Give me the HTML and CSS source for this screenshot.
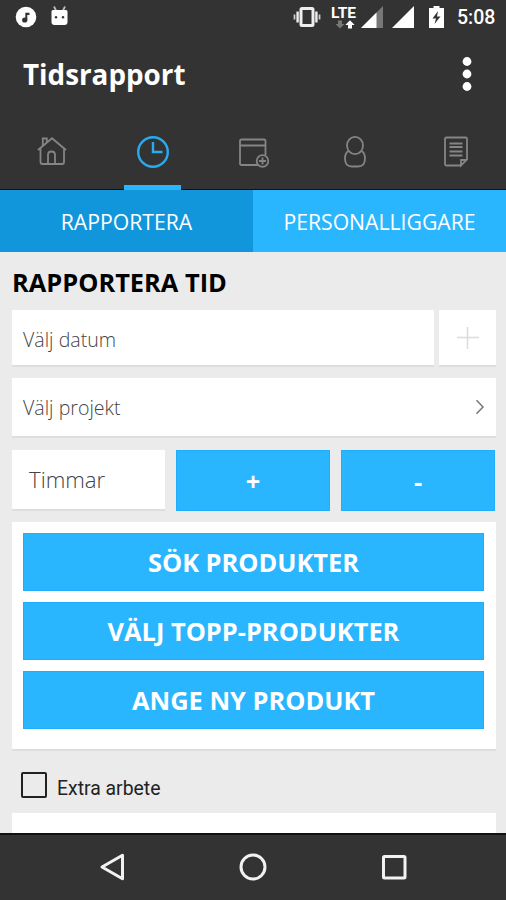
FILE: index.html
```html
<!DOCTYPE html>
<html lang="sv">
<head>
    <meta charset="UTF-8">
    <meta name="viewport" content="width=device-width, initial-scale=1.0">
    <title>Tidsrapport</title>
    <link rel="stylesheet" href="styles.css">
</head>
<body>

<!-- Status bar -->
<div class="status-bar">
    <svg class="status-left" width="56" height="24" viewBox="0 0 56 24">
        <circle cx="11" cy="12" r="10.3" fill="#fff"/>
        <path d="M10.300 15.500V7.800H14.500V10H12.300V15.500" fill="#333"/>
        <circle cx="9.700" cy="15" r="2.600" fill="#333"/>
        <path d="M39 1.500l2 4M50 1.500l-2 4" stroke="#bbb" stroke-width="1.800"/>
        <path d="M36.500 6.500Q36.500 5 38 5H51Q52.500 5 52.500 6.500V17Q52.500 20 49.500 20H39.500Q36.500 20 36.500 17Z" fill="#fff"/>
        <circle cx="41" cy="12.300" r="1.200" fill="#333"/>
        <circle cx="48" cy="12.300" r="1.200" fill="#333"/>
    </svg>
    <div class="status-right">
        <svg width="28" height="24" viewBox="0 0 28 24">
            <path d="M1.500 9.500v5M26.500 9.500v5" stroke="#ccc" stroke-width="1.800"/>
            <path d="M4.600 6.500v11M23.400 6.500v11" stroke="#eee" stroke-width="2.400"/>
            <rect x="8" y="3.500" width="12" height="17" rx="1" fill="none" stroke="#eee" stroke-width="3"/>
        </svg>
        <div class="lte">
            <span>LTE</span>
            <svg width="20" height="9" viewBox="0 0 20 9">
                <path d="M5 8.500L.5 4H3V.5H7V4H9.500Z" fill="#777"/>
                <path d="M15 .3L19.700 5H17V8.500H13V5H10.300Z" fill="#fff"/>
            </svg>
        </div>
        <svg class="signal" width="22" height="22" viewBox="0 0 22 22">
            <path d="M0 22L22 0V22Z" fill="#777"/>
            <path d="M0 22L15.500 6.500V22Z" fill="#fff"/>
        </svg>
        <svg class="signal full" width="22" height="22" viewBox="0 0 22 22">
            <path d="M0 22L22 0V22Z" fill="#fff"/>
        </svg>
        <svg class="battery" width="15" height="22" viewBox="0 0 15 22">
            <path d="M4.500 0h6v2H15v20H0V2H4.500Z" fill="#fff"/>
            <path d="M9 5L3.500 12.500H7L5.500 18L11.500 10.500H8Z" fill="#333"/>
        </svg>
        <span class="time">5:08</span>
    </div>
</div>

<!-- Title and menu -->
<header class="title-bar">
    <h1>Tidsrapport</h1>
    <svg width="10" height="36" viewBox="0 0 10 36" fill="#fff">
        <circle cx="5" cy="5.500" r="4.400"/>
        <circle cx="5" cy="18" r="4.400"/>
        <circle cx="5" cy="30.500" r="4.400"/>
    </svg>
</header>

<!-- Icon tabs -->
<nav class="tabs">
    <a class="tab">
        <svg width="34" height="34" viewBox="0 0 34 34">
            <path d="M3 15L17 3.200L31 15M5.500 13.500V27Q5.500 29 7.500 29H27Q29 29 29 27V13.500M7.800 11V3.500H11.800V7.500M13 29V20Q13 16.500 16.500 16.500Q20 16.500 20 20V29"/>
        </svg>
    </a>
    <a class="tab active">
        <svg width="34" height="34" viewBox="0 0 34 34">
            <circle cx="17" cy="17" r="14.800"/>
            <path d="M17 7V17H26.500"/>
        </svg>
    </a>
    <a class="tab">
        <svg width="34" height="34" viewBox="0 0 34 34">
            <path d="M21 30H4.500Q3 30 3 28.500V6Q3 4.500 4.500 4.500H27Q28.500 4.500 28.500 6V20M3 10.500H28.500"/>
            <circle cx="25.500" cy="26" r="5.800"/>
            <path d="M25.500 22.500V29.500M22 26H29"/>
        </svg>
    </a>
    <a class="tab">
        <svg width="34" height="34" viewBox="0 0 34 34">
            <ellipse cx="17" cy="10.500" rx="8" ry="8.700"/>
            <path d="M10.500 16Q7 18 7 23.500Q7 31.500 14 31.500H20Q27 31.500 27 23.500Q27 18 23.500 16"/>
        </svg>
    </a>
    <a class="tab">
        <svg width="34" height="34" viewBox="0 0 34 34">
            <path d="M22 30.500H7.500Q6 30.500 6 29V4Q6 2.500 7.500 2.500H26.500Q28 2.500 28 4V24.500L22 30.500V25H28M10.500 8.500H23.500M10.500 12H23.500M10.500 16.500H23.500M10.500 20.500H23.500"/>
        </svg>
    </a>
</nav>

<div class="segments">
    <a class="segment selected">RAPPORTERA</a>
    <a class="segment">PERSONALLIGGARE</a>
</div>

<!-- Time report form -->
<main class="content">
    <h2>RAPPORTERA TID</h2>

    <div class="date-row">
        <div class="field date">Välj datum</div>
        <div class="field add">
            <svg width="24" height="24" viewBox="0 0 24 24">
                <path d="M11.500 1V23M1 11.500H23" stroke="#dcdcdc" stroke-width="1.500"/>
            </svg>
        </div>
    </div>

    <div class="field project">
        <span>Välj projekt</span>
        <svg width="10" height="16" viewBox="0 0 10 16">
            <path d="M1.500 1.200L8 8L1.500 14.800" fill="none" stroke="#777" stroke-width="1.500"/>
        </svg>
    </div>

    <div class="hours-row">
        <div class="field hours">Timmar</div>
        <button class="btn step">+</button>
        <button class="btn step">-</button>
    </div>

    <div class="products">
        <button class="btn">SÖK PRODUKTER</button>
        <button class="btn">VÄLJ TOPP-PRODUKTER</button>
        <button class="btn">ANGE NY PRODUKT</button>
    </div>

    <div class="extra">
        <span class="checkbox"></span>
        <span class="extra-label">Extra arbete</span>
    </div>

    <div class="next-card"></div>
</main>

<!-- Android navigation -->
<footer class="nav-bar">
    <svg width="28" height="28" viewBox="0 0 28 28"><path d="M24.500 2.200V25.800L4 14Z"/></svg>
    <svg width="28" height="28" viewBox="0 0 28 28"><circle cx="14" cy="14" r="12"/></svg>
    <svg width="28" height="28" viewBox="0 0 28 28"><rect x="3.500" y="3.500" width="21.500" height="21.500" rx="1"/></svg>
</footer>

</body>
</html>
```
FILE: styles.css
```css
/* Base */
* {
    box-sizing: border-box;
}
body {
    margin: 0;
    height: 900px;
    display: flex;
    flex-direction: column;
    overflow: hidden;
    background: #ebebeb;
    font-family: "Open Sans", sans-serif;
    color: #000;
}
svg {
    display: block;
    flex: none;
}

/* Status bar */
.status-bar {
    height: 36px;
    padding: 5px 10px 0 15px;
    display: flex;
    justify-content: space-between;
    background: #333;
    color: #fff;
    font-family: Roboto, sans-serif;
}
.status-right {
    display: flex;
    align-items: flex-start;
}
.lte {
    width: 26px;
    margin: 2px 0 0 10px;
}
.lte span {
    display: block;
    height: 13px;
    font-size: 15.5px;
    line-height: 13px;
    font-weight: 700;
}
.lte svg {
    margin-left: 4px;
}
.signal {
    margin: 1px 0 0 4px;
}
.signal.full {
    margin-left: 9px;
}
.battery {
    margin: 1px 13px 0 15px;
}
.time {
    width: 39px;
    font-size: 19.5px;
    line-height: 26px;
    font-weight: 500;
    white-space: nowrap;
}

/* Title bar */
.title-bar {
    height: 76px;
    padding: 0 34px 0 23px;
    display: flex;
    align-items: center;
    justify-content: space-between;
    background: #333;
    color: #fff;
}
.title-bar h1 {
    margin: 0;
    font-size: 27.8px;
    line-height: 36px;
    font-weight: 700;
}

/* Tabs */
.tabs {
    height: 78px;
    padding-left: 1px;
    display: flex;
    background: #333;
    border-bottom: 1px solid #111;
}
.tab {
    flex: 1;
    padding-top: 23px;
    display: flex;
    flex-direction: column;
    align-items: center;
    justify-content: space-between;
}
.tab svg {
    fill: none;
    stroke: #858585;
    stroke-width: 1.8;
}
.tab.active svg {
    stroke: #29abf0;
    stroke-width: 2.4;
}
.tab.active::after {
    content: "";
    width: 57px;
    height: 5px;
    margin-bottom: -1px;
    background: #29b6ff;
}

/* Segments */
.segments {
    height: 62px;
    display: flex;
}
.segment {
    flex: 1;
    background: #29b6ff;
    color: #fff;
    font-size: 21.2px;
    line-height: 64px;
    text-align: center;
}
.segment.selected {
    background: #1296db;
}

/* Content */
.content {
    height: 581px;
    padding: 14px 10px 0 12px;
    display: flex;
    flex-direction: column;
}
.content h2 {
    margin: 0 0 12px;
    font-size: 25.4px;
    line-height: 32px;
    font-weight: 700;
}
.field {
    background: #fff;
    box-shadow: 0 2px 0 #dedede;
    color: #444;
    font-size: 19.6px;
    font-weight: 300;
}
.date-row {
    height: 55px;
    margin-bottom: 13px;
    display: flex;
    gap: 5px;
}
.date {
    flex: 1;
    padding-left: 11px;
    line-height: 60px;
}
.add {
    width: 57px;
    display: flex;
    align-items: center;
    justify-content: center;
}
.project {
    height: 58px;
    margin-bottom: 14px;
    padding: 0 11px;
    display: flex;
    align-items: center;
    justify-content: space-between;
}
.hours-row {
    height: 60px;
    margin-bottom: 12px;
    padding-right: 1px;
    display: flex;
    gap: 11px;
}
.hours {
    flex: 1;
    height: 59px;
    padding-left: 17px;
    font-size: 22.2px;
    line-height: 60px;
}
.btn {
    height: 58px;
    padding: 0;
    border: 1px solid #1faefb;
    background: #29b6ff;
    color: #fff;
    font-family: inherit;
    font-size: 25.4px;
    font-weight: 700;
}
.btn.step {
    width: 154px;
    height: 61px;
}
.products {
    height: 227px;
    padding: 11px 12px 11px 11px;
    display: flex;
    flex-direction: column;
    gap: 11px;
    background: #fff;
    box-shadow: 0 2px 0 #dedede;
}
.extra {
    height: 64px;
    padding: 23px 0 0 9px;
    display: flex;
    align-items: flex-start;
    gap: 10px;
}
.checkbox {
    width: 26px;
    height: 26px;
    border: 2px solid #222;
    border-radius: 2px;
}
.extra-label {
    padding-top: 5px;
    color: #222;
    font-family: Roboto, sans-serif;
    font-size: 19.4px;
    line-height: 24px;
}
.next-card {
    flex: 1;
    background: #fff;
}

/* Navigation bar */
.nav-bar {
    flex: 1;
    padding: 0 98px 1px;
    display: flex;
    align-items: center;
    justify-content: space-between;
    border-top: 2px solid #111;
    background: #333;
}
.nav-bar svg {
    fill: none;
    stroke: #f2f2f2;
    stroke-width: 3;
    stroke-linejoin: round;
}
```
